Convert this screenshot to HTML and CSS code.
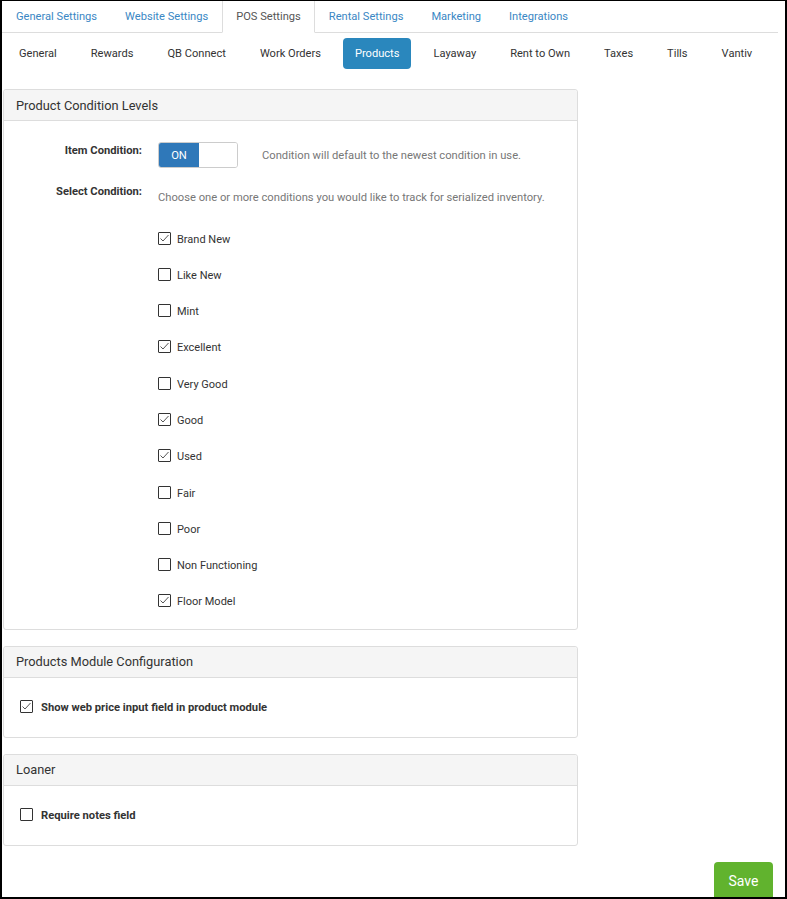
FILE: index.html
```html
<!DOCTYPE html>
<html>
<head>
<meta charset="utf-8">
<link rel="stylesheet" href="styles.css">
</head>
<body>
<div class="frame">
  <div class="tabs">
    <a class="tab">General Settings</a>
    <a class="tab">Website Settings</a>
    <a class="tab active">POS Settings</a>
    <a class="tab">Rental Settings</a>
    <a class="tab">Marketing</a>
    <a class="tab">Integrations</a>
  </div>
  <div class="pills">
    <a class="pill">General</a>
    <a class="pill">Rewards</a>
    <a class="pill">QB Connect</a>
    <a class="pill">Work Orders</a>
    <a class="pill active">Products</a>
    <a class="pill">Layaway</a>
    <a class="pill">Rent to Own</a>
    <a class="pill">Taxes</a>
    <a class="pill">Tills</a>
    <a class="pill">Vantiv</a>
  </div>

  <div class="panel first">
    <div class="panel-heading">Product Condition Levels</div>
    <div class="panel-body cond-body">
      <div class="form-row">
        <div class="label">Item Condition:</div>
        <div class="field toggle-field">
          <div class="toggle"><span class="toggle-on">ON</span><span class="toggle-off"></span></div>
          <span class="help">Condition will default to the newest condition in use.</span>
        </div>
      </div>
      <div class="form-row row2">
        <div class="label">Select Condition:</div>
        <div class="field">
          <p class="help desc">Choose one or more conditions you would like to track for serialized inventory.</p>
          <div class="checklist">
            <label class="cb-item"><span class="cb checked"><svg width="13" height="13" viewBox="0 0 13 13"><polyline points="2.5,6.5 5,9 10.5,3" fill="none" stroke="#555" stroke-width="1"/></svg></span>Brand New</label>
            <label class="cb-item"><span class="cb"></span>Like New</label>
            <label class="cb-item"><span class="cb"></span>Mint</label>
            <label class="cb-item"><span class="cb checked"><svg width="13" height="13" viewBox="0 0 13 13"><polyline points="2.5,6.5 5,9 10.5,3" fill="none" stroke="#555" stroke-width="1"/></svg></span>Excellent</label>
            <label class="cb-item"><span class="cb"></span>Very Good</label>
            <label class="cb-item"><span class="cb checked"><svg width="13" height="13" viewBox="0 0 13 13"><polyline points="2.5,6.5 5,9 10.5,3" fill="none" stroke="#555" stroke-width="1"/></svg></span>Good</label>
            <label class="cb-item"><span class="cb checked"><svg width="13" height="13" viewBox="0 0 13 13"><polyline points="2.5,6.5 5,9 10.5,3" fill="none" stroke="#555" stroke-width="1"/></svg></span>Used</label>
            <label class="cb-item"><span class="cb"></span>Fair</label>
            <label class="cb-item"><span class="cb"></span>Poor</label>
            <label class="cb-item"><span class="cb"></span>Non Functioning</label>
            <label class="cb-item"><span class="cb checked"><svg width="13" height="13" viewBox="0 0 13 13"><polyline points="2.5,6.5 5,9 10.5,3" fill="none" stroke="#555" stroke-width="1"/></svg></span>Floor Model</label>
          </div>
        </div>
      </div>
    </div>
  </div>

  <div class="panel">
    <div class="panel-heading">Products Module Configuration</div>
    <div class="panel-body simple-body">
      <label class="cb-item bold"><span class="cb checked"><svg width="13" height="13" viewBox="0 0 13 13"><polyline points="2.5,6.5 5,9 10.5,3" fill="none" stroke="#555" stroke-width="1"/></svg></span>Show web price input field in product module</label>
    </div>
  </div>

  <div class="panel">
    <div class="panel-heading">Loaner</div>
    <div class="panel-body simple-body">
      <label class="cb-item bold"><span class="cb"></span>Require notes field</label>
    </div>
  </div>

  <div class="actions">
    <button class="btn-save">Save</button>
  </div>
</div>
</body>
</html>
```

FILE: styles.css
```css
html, body {
  margin: 0;
  padding: 0;
  background: #fff;
}
body {
  font-family: Roboto, "Liberation Sans", Arial, sans-serif;
  color: #333;
}
.frame {
  box-sizing: border-box;
  width: 787px;
  height: 899px;
  border-top: 1px solid #000;
  border-left: 2px solid #000;
  border-right: 2px solid #000;
  border-bottom: 2px solid #000;
  overflow: hidden;
  background: #fff;
}
.tabs {
  display: flex;
  height: 31px;
  margin: 0 7px 0 0;
  border-bottom: 1px solid #ddd;
}
.tab {
  display: flex;
  align-items: center;
  padding: 0 13px 1px 13px;
  box-sizing: border-box;
  font-size: 11.12px;
  white-space: nowrap;
  color: #3a87c4;
  border: 1px solid transparent;
  border-top: none;
  border-bottom: none;
  margin-bottom: -1px;
}
.tab.active {
  color: #555;
  background: #fff;
  border-color: #ddd;
  border-bottom: 1px solid #fff;
  height: 32px;
}
.pills {
  display: flex;
  gap: 10px;
  margin-top: 5px;
  padding-left: 5px;
}
.pill {
  display: flex;
  align-items: center;
  height: 31px;
  padding: 0 12px;
  font-size: 11.1px;
  white-space: nowrap;
  color: #333;
  border-radius: 4px;
}
.pill.active {
  background: #2a87bd;
  color: #fff;
}
.panel {
  width: 575px;
  margin: 16px 0 0 1px;
  box-sizing: border-box;
  border: 1px solid #ddd;
  border-radius: 3px;
  background: #fff;
}
.panel.first {
  margin-top: 20px;
}
.panel-heading {
  height: 31px;
  box-sizing: border-box;
  display: flex;
  align-items: center;
  padding: 0 12px;
  background: #f5f5f5;
  border-bottom: 1px solid #ddd;
  font-size: 12.8px;
  color: #333;
  border-radius: 3px 3px 0 0;
}
.panel-body {
  font-size: 11.2px;
}
.cond-body {
  padding: 21px 0 18px 0;
}
.form-row {
  display: flex;
}
.row2 {
  margin-top: 15px;
}
.label {
  width: 138px;
  text-align: right;
  font-weight: bold;
  line-height: 18px;
  color: #333;
}
.field {
  margin-left: 16px;
}
.toggle-field {
  display: flex;
  align-items: center;
}
.toggle {
  display: flex;
  width: 80px;
  height: 26px;
  box-sizing: border-box;
  border: 1px solid #ccc;
  border-radius: 3px;
  overflow: hidden;
}
.toggle-on {
  width: 40px;
  background: #2f78b9;
  color: #fff;
  font-size: 11.2px;
  display: flex;
  align-items: center;
  justify-content: center;
}
.toggle-off {
  flex: 1;
  background: #fff;
}
.help {
  color: #777;
  font-size: 11.2px;
  margin-left: 24px;
}
.help.desc {
  margin: 6px 0 0 0;
  line-height: 18px;
}
.checklist {
  display: flex;
  flex-direction: column;
  gap: 18.3px;
  margin-top: 23px;
}
.cb-item {
  display: flex;
  align-items: center;
  height: 18px;
  font-size: 11px;
  color: #333;
}
.cb-item.bold {
  font-weight: bold;
  font-size: 11.2px;
}
.cb {
  width: 13px;
  height: 13px;
  box-sizing: border-box;
  border: 1px solid #333;
  border-radius: 1px;
  margin-right: 6px;
  position: relative;
  top: -1px;
  display: inline-flex;
  flex: none;
}
.cb-item.bold .cb {
  margin-right: 8px;
}
.cb svg {
  position: absolute;
  left: -1px;
  top: -1px;
}
.simple-body {
  padding: 21px 16px 20px 16px;
}
.actions {
  display: flex;
  justify-content: flex-end;
  margin-top: 16px;
  padding-right: 12px;
}
.btn-save {
  width: 59px;
  height: 38px;
  border: none;
  border-radius: 4px;
  background: #61b32e;
  color: #fff;
  font-family: Roboto, "Liberation Sans", Arial, sans-serif;
  font-size: 14px;
  padding: 0;
}
```
